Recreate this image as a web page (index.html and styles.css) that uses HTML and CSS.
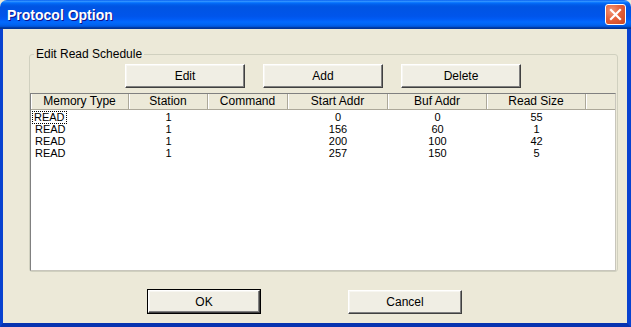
FILE: index.html
```html
<!DOCTYPE html>
<html lang="en">
<head>
    <meta charset="UTF-8">
    <title>Protocol Option</title>
    <link rel="stylesheet" href="styles.css">
</head>
<body>
<div class="window">
    <div class="titlebar">
        <span class="title">Protocol Option</span>
        <button class="close" aria-label="Close">
            <svg width="13" height="13" viewBox="0 0 13 13">
                <path d="M2 2 L11 11 M11 2 L2 11" stroke="#fff" stroke-width="2.2" stroke-linecap="square"/>
            </svg>
        </button>
    </div>
    <div class="frame">
        <fieldset class="group">
            <legend>Edit Read Schedule</legend>
            <div class="toolbar">
                <button class="btn">Edit</button>
                <button class="btn">Add</button>
                <button class="btn">Delete</button>
            </div>
            <div class="list">
                <div class="list-row list-head">
                    <span class="cell">Memory Type</span>
                    <span class="cell">Station</span>
                    <span class="cell">Command</span>
                    <span class="cell">Start Addr</span>
                    <span class="cell">Buf Addr</span>
                    <span class="cell">Read Size</span>
                    <span class="cell"></span>
                </div>
                <div class="list-row">
                    <span class="cell first"><span class="focus">READ</span></span>
                    <span class="cell">1</span>
                    <span class="cell"></span>
                    <span class="cell">0</span>
                    <span class="cell">0</span>
                    <span class="cell">55</span>
                </div>
                <div class="list-row">
                    <span class="cell first">READ</span>
                    <span class="cell">1</span>
                    <span class="cell"></span>
                    <span class="cell">156</span>
                    <span class="cell">60</span>
                    <span class="cell">1</span>
                </div>
                <div class="list-row">
                    <span class="cell first">READ</span>
                    <span class="cell">1</span>
                    <span class="cell"></span>
                    <span class="cell">200</span>
                    <span class="cell">100</span>
                    <span class="cell">42</span>
                </div>
                <div class="list-row">
                    <span class="cell first">READ</span>
                    <span class="cell">1</span>
                    <span class="cell"></span>
                    <span class="cell">257</span>
                    <span class="cell">150</span>
                    <span class="cell">5</span>
                </div>
            </div>
        </fieldset>
        <div class="actions">
            <button class="btn btn-default">OK</button>
            <button class="btn btn-wide">Cancel</button>
        </div>
    </div>
</div>
</body>
</html>
```

FILE: styles.css
```css
/* Base */
* {
    box-sizing: border-box;
}

body {
    margin: 0;
    font-family: "Liberation Sans", Arial, sans-serif;
    font-size: 12px;
    color: #000;
    background: #ece9d8;
}

/* Window frame */
.window {
    width: 631px;
    height: 327px;
    display: flex;
    flex-direction: column;
}

.titlebar {
    height: 29px;
    flex: none;
    display: flex;
    align-items: center;
    justify-content: space-between;
    padding: 0 5px 0 7px;
    border-radius: 7px 7px 0 0;
    background: linear-gradient(to bottom, #0058ee 0%, #3593ff 4%, #288eff 6%, #127dff 8%, #036ffc 10%, #0262ee 14%, #0057e5 20%, #0054e3 24%, #0055eb 56%, #005bf5 66%, #026afe 76%, #0062ef 86%, #0052d6 92%, #0040ab 94%, #003092 100%);
}

.title {
    color: #fff;
    font-weight: bold;
    font-size: 14px;
    text-shadow: 1px 1px #0f1089;
}

.close {
    width: 21px;
    height: 21px;
    padding: 0;
    display: flex;
    align-items: center;
    justify-content: center;
    border: 1px solid #fff;
    border-radius: 3px;
    background: radial-gradient(circle at 30% 30%, #f19779 0%, #e5613b 45%, #cc4621 100%);
}

.frame {
    flex: 1;
    background: #ece9d8;
    border-left: 3px solid #0842d0;
    border-right: 4px solid #0842d0;
    border-bottom: 4px solid #0733b0;
    display: flex;
    flex-direction: column;
}

/* Group box */
.group {
    margin: 18px 9px 0 26px;
    padding: 0;
    border: 1px solid #d0d0bf;
    border-radius: 3px;
    min-width: 0;
}

.group legend {
    margin-left: 4px;
    padding: 0 2px;
    line-height: 14px;
    font-size: 12px;
}

.toolbar {
    display: flex;
    gap: 18px;
    padding-left: 95px;
    margin-top: 3px;
}

/* Classic buttons */
.btn {
    width: 120px;
    height: 24px;
    padding: 0;
    font-family: inherit;
    font-size: 12px;
    color: #000;
    background: #f0eee4;
    border: 1px solid;
    border-color: #fff #404040 #404040 #fff;
    box-shadow: inset -1px -1px #808080, inset 1px 1px #f7f6f1;
}

.btn-default {
    width: 112px;
    height: 23px;
    outline: 1px solid #000;
    outline-offset: 0;
}

.btn-wide {
    width: 114px;
}

/* List view */
.list {
    margin-top: 5px;
    height: 178px;
    margin-right: 1px;
    background: #fff;
    border: 1px solid;
    border-color: #808080 #c8c6bc #c8c6bc #808080;
}

.list-row {
    display: grid;
    grid-template-columns: 98px 79px 80px 100px 99px 99px 1fr;
    height: 12px;
    line-height: 12px;
    font-size: 11px;
}

.list-row .cell {
    text-align: center;
    white-space: nowrap;
}

.list-row .first {
    text-align: left;
    padding-left: 4px;
}

.list-head {
    height: 16px;
    line-height: 15px;
    font-size: 12px;
    background: #ece9d8;
    border-bottom: 1px solid #aca899;
    margin-bottom: 1px;
}

.list-head .cell {
    overflow: hidden;
    border-right: 1px solid #aca899;
    box-shadow: inset 1px 0 #fff;
}

.list-head .cell:last-child {
    border-right: none;
}

.focus {
    display: inline-block;
    line-height: 11px;
    padding: 0 1px;
    margin-left: -2px;
    outline: 1px dotted #000;
}

/* Dialog buttons */
.actions {
    display: flex;
    gap: 88px;
    padding-left: 145px;
    margin-top: 18px;
}
```
